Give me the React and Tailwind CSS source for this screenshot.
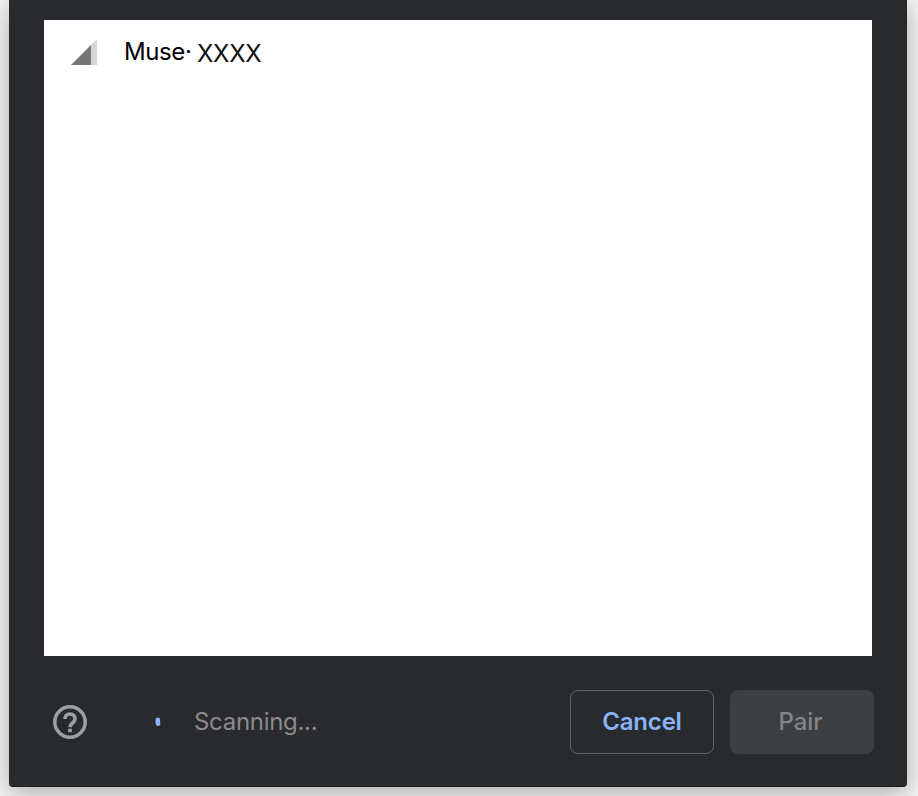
function SignalIcon() {
  return (
    <svg width="26" height="27" viewBox="0 0 26 27" className="block shrink-0" aria-hidden="true">
      <path d="M20 6L26 0V26H20Z" fill="#d6d6d6" />
      <path d="M0 26L20 6V26Z" fill="#757575" />
    </svg>
  );
}

function HelpIcon() {
  return (
    <svg width="40" height="40" viewBox="0 0 40 40" className="block" aria-hidden="true">
      <circle cx="20" cy="20" r="15.2" fill="none" stroke="#9aa0a6" strokeWidth="3.5" />
      <path
        d="M15 17.1C15 13.9 17 12 20 12s5 2 5 4.9c0 4-5 4.2-5 8.3"
        fill="none"
        stroke="#9aa0a6"
        strokeWidth="3.7"
      />
      <path d="M18.1 26.7h3.8v3.5h-3.8z" fill="#9aa0a6" />
    </svg>
  );
}

export default function App() {
  return (
    <div className="h-[796px] w-[918px] overflow-hidden bg-[#f4f4f4] pr-[11px] pl-[9px] font-['Inter','Liberation_Sans',sans-serif]">
      <section className="flex h-[787px] flex-col rounded-b-[4px] border-b border-[#1c1d20] bg-[#292a2d] pt-5 pr-[35px] pl-[35px] shadow-[0_6px_26px_rgba(0,0,0,0.3)]">
        <ul className="h-[636px] w-[828px] bg-white">
          <li className="flex h-16 items-center pl-[27px] text-2xl text-black">
            <SignalIcon />
            <span className="ml-[27px] w-[73px] whitespace-nowrap tracking-[-0.4px]">Muse·</span>
            <span className="pt-[3px] tracking-[-0.25px] text-[#111]">XXXX</span>
          </li>
        </ul>
        <footer className="mt-[34px] -mr-0.5 flex h-16 items-center">
          <button className="ml-1.5" aria-label="Help">
            <HelpIcon />
          </button>
          <svg width="6" height="10" viewBox="0 0 6 10" className="ml-[65px]" aria-hidden="true">
            <path d="M2.8 2.7Q2.6 4.5 3.1 6.7" fill="none" stroke="#8ab4f8" strokeWidth="4.6" strokeLinecap="round" />
          </svg>
          <span className="ml-[33px] text-2xl tracking-[-0.3px] text-[#8b8b8d]">Scanning...</span>
          <div className="ml-auto flex gap-4">
            <button className="h-16 w-36 rounded-lg border border-[#5f6368] text-2xl font-[560] tracking-[-0.2px] text-[#8ab4f8]">
              Cancel
            </button>
            <button className="h-16 w-36 rounded-lg bg-[#3c4043] pr-[3px] text-2xl font-medium text-[#80868b]">
              Pair
            </button>
          </div>
        </footer>
      </section>
    </div>
  );
}
